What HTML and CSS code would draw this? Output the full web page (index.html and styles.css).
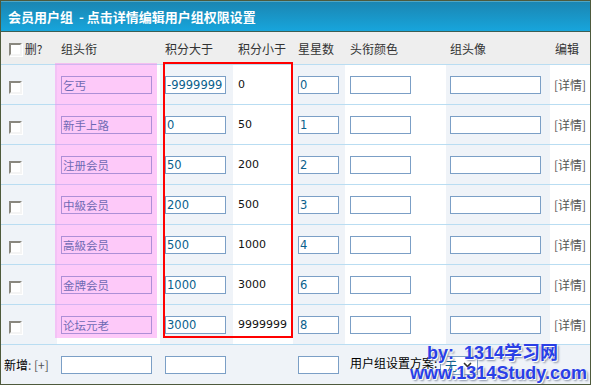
FILE: index.html
```html
<!DOCTYPE html>
<html lang="zh-CN">
<head>
  <meta charset="UTF-8">
  <title>会员用户组</title>
  <link rel="stylesheet" href="styles.css">
</head>
<body>

  <div class="panel">
    <div class="title">会员用户组 &nbsp;- 点击详情编辑用户组权限设置</div>

    <table class="grid">
      <colgroup>
        <col style="width:56px">
        <col style="width:103px">
        <col style="width:73px">
        <col style="width:60px">
        <col style="width:52px">
        <col style="width:101px">
        <col style="width:104px">
        <col style="width:40px">
      </colgroup>
      <thead>
        <tr>
          <th class="c1"><span class="chk"></span> 删?</th>
          <th class="c2">组头衔</th>
          <th class="c3">积分大于</th>
          <th class="c4">积分小于</th>
          <th class="c5">星星数</th>
          <th class="c6">头衔颜色</th>
          <th class="c7">组头像</th>
          <th class="c8">编辑</th>
        </tr>
      </thead>
      <tbody id="groupRows"></tbody>
      <tfoot>
        <tr>
          <td class="c1 add">新增<span class="muted">: [+]</span></td>
          <td class="c2"><input class="w-name" type="text"></td>
          <td class="c3"><input class="w-min" type="text"></td>
          <td class="c4"></td>
          <td class="c5"><input class="w-star" type="text"></td>
          <td class="c6 plan" colspan="2">用户组设置方案: <span class="select">无<svg width="9" height="6" viewBox="0 0 9 6"><path d="M1 1 L4.5 4.5 L8 1" fill="none" stroke="#333" stroke-width="1.6"/></svg></span></td>
          <td class="c8"></td>
        </tr>
      </tfoot>
    </table>

    <div class="mark-pink"></div>
    <div class="mark-red"></div>
    <div class="watermark">
      <div class="wm-1">by:&nbsp; 1314学习网</div>
      <div class="wm-2">www.1314Study.com</div>
    </div>
  </div>

  <script>
    const groups = [
      ["乞丐", "-9999999", "0", "0"],
      ["新手上路", "0", "50", "1"],
      ["注册会员", "50", "200", "2"],
      ["中級会员", "200", "500", "3"],
      ["高級会员", "500", "1000", "4"],
      ["金牌会员", "1000", "3000", "6"],
      ["论坛元老", "3000", "9999999", "8"]
    ];

    const tbody = document.getElementById("groupRows");
    groups.forEach(function (g) {
      const row = tbody.insertRow();
      row.innerHTML = `
        <td class="c1"><span class="chk"></span></td>
        <td class="c2"><input class="w-name" type="text" value="${g[0]}"></td>
        <td class="c3"><input class="w-min" type="text" value="${g[1]}"></td>
        <td class="c4">${g[2]}</td>
        <td class="c5"><input class="w-star" type="text" value="${g[3]}"></td>
        <td class="c6"><input class="w-color" type="text"></td>
        <td class="c7"><input class="w-name" type="text"></td>
        <td class="c8 muted">[详情]</td>
      `;
    });
  </script>

</body>
</html>
```

FILE: styles.css
```css
* {
  box-sizing: border-box;
}

body {
  margin: 0;
  font-family: "DejaVu Sans", "Noto Sans CJK SC", sans-serif;
  font-size: 12px;
  color: #000;
}

.panel {
  position: relative;
  width: 591px;
  height: 385px;
  border: 1px solid #4e5a3c;
  background: #eff3f8;
  overflow: hidden;
}

.title {
  height: 31px;
  padding-left: 7px;
  line-height: 30px;
  color: #fff;
  font-family: "Noto Sans CJK SC", sans-serif;
  font-size: 13px;
  font-weight: bold;
  background: linear-gradient(#1b86b2, #17a5dc);
  border-top: 1px solid #4ea6c6;
  border-bottom: 1px solid #3d5e52;
}

.grid {
  width: 589px;
  table-layout: fixed;
  border-collapse: separate;
  border-spacing: 0;
}

.grid th,
.grid td {
  padding: 0 0 0 5px;
  text-align: left;
  white-space: nowrap;
  overflow: hidden;
}

.grid th {
  height: 32px;
  padding-top: 1px;
  background: #eeeeee;
  color: #333;
  font-family: "Noto Sans CJK SC", sans-serif;
  font-weight: normal;
  line-height: 16px;
}

.grid tbody td,
.grid tfoot td {
  height: 40px;
  border-top: 1px solid #b9ddf2;
}

.grid tbody td:nth-child(odd) {
  background: #eff3f8;
}

.grid tbody td:nth-child(even) {
  background: #fff;
}

.grid tfoot td {
  background: #eff3f8;
  height: 40px;
}

.grid .c1 {
  padding-left: 8px;
}

.grid .c2,
.grid .c7 {
  padding-left: 4px;
}

.grid td.c4 {
  padding-left: 5px;
  font-size: 11px;
  color: #111;
}

.grid tbody td.c1 {
  padding-top: 5px;
}

.grid td.c8 {
  padding-left: 4px;
  font-family: "Noto Sans CJK SC", sans-serif;
}

.muted {
  color: #555;
}

.chk {
  display: inline-block;
  width: 13px;
  height: 13px;
  vertical-align: middle;
  background: #fff;
  border: 2px solid;
  border-color: #8a887f #f4f4f4 #f4f4f4 #8a887f;
  box-shadow: 1px 1px 0 #fff;
}

th .chk {
  margin-top: -2px;
}

input {
  height: 18px;
  padding: 0 1px;
  border: 1px solid #7b9fc6;
  background: #fff;
  color: #0a5f8c;
  font-family: "DejaVu Sans", "Noto Sans CJK SC", sans-serif;
  font-size: 11.5px;
  vertical-align: middle;
  outline: none;
}

.w-name {
  width: 91px;
}

.w-min {
  width: 61px;
}

.w-star {
  width: 41px;
}

.w-color {
  width: 61px;
}

.grid tfoot td.add {
  padding-left: 3px;
  font-family: "Noto Sans CJK SC", sans-serif;
}

.plan {
  font-family: "Noto Sans CJK SC", sans-serif;
}

.select {
  display: inline-flex;
  align-items: center;
  gap: 6px;
  width: 38px;
  height: 19px;
  padding-left: 4px;
  border: 1px solid #7b9fc6;
  background: #fff;
  color: #0a5f8c;
  vertical-align: middle;
}

.mark-pink {
  position: absolute;
  left: 54px;
  top: 62px;
  width: 102px;
  height: 275px;
  background: rgba(250, 120, 240, 0.4);
}

.mark-red {
  position: absolute;
  left: 162px;
  top: 61px;
  width: 130px;
  height: 276px;
  border: 2px solid #ff0000;
}

.watermark {
  position: absolute;
  left: 409px;
  top: 342px;
  color: #2a3fe6;
  font-family: "Liberation Sans", "Noto Sans CJK SC", sans-serif;
  font-size: 18px;
  font-weight: bold;
  line-height: 20px;
  text-shadow: 1px 1px 0 #fff, 2px 2px 2px #8a93a8;
}

.wm-1 {
  padding-left: 17px;
}
```
